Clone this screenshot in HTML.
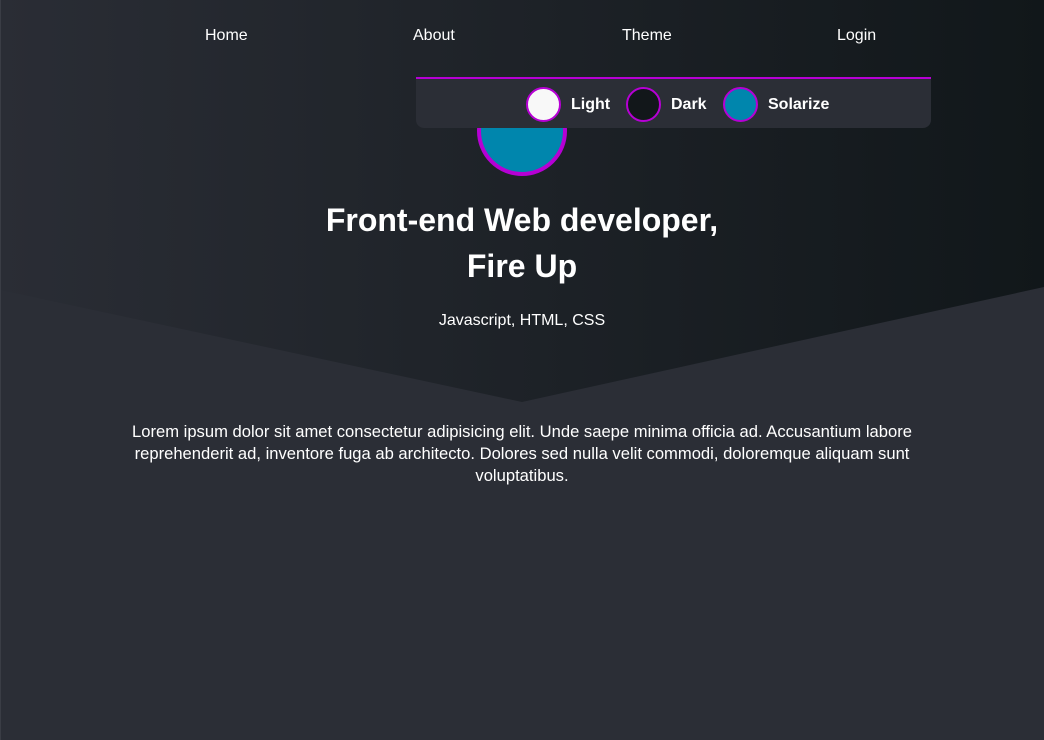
<!DOCTYPE html>
<html><head><style>
body{margin:0;width:1044px;height:740px;overflow:hidden;background:#2b2e36;font-family:"Liberation Sans",sans-serif;color:#fff;position:relative}
svg.bg{position:absolute;left:0;top:0}
.nav a{position:absolute;top:27px;font-size:16px;color:#fff;text-decoration:none}
.avatar{position:absolute;left:477px;top:86px;width:82px;height:82px;border-radius:50%;background:#0086ad;border:4px solid #b600d4}
.menu{position:absolute;left:416px;top:77px;width:515px;height:49px;background:#2b2e36;border-top:2px solid #b600d4;border-radius:0 0 8px 8px}
.opt{position:absolute;top:8px;display:flex;align-items:center;font-weight:bold;font-size:16px}
.c{border-radius:50%;border:2px solid #b600d4;margin-right:10px;box-sizing:border-box;width:35px;height:35px}
h1{position:absolute;top:197px;left:0;width:1044px;text-align:center;margin:0;font-size:32px;line-height:46px;font-weight:bold}
.sub{position:absolute;top:312px;width:1044px;text-align:center;font-size:16px}
.p{position:absolute;top:421px;left:107px;width:830px;text-align:center;font-size:16.6px;line-height:22px}
</style></head><body>
<svg class="bg" width="1044" height="740"><defs><linearGradient id="g" x1="0" x2="1"><stop offset="0" stop-color="#2a2d35"/><stop offset="1" stop-color="#11171a"/></linearGradient></defs>
<polygon points="0,0 1044,0 1044,287 522,402 0,290" fill="url(#g)"/>
<rect x="0" y="0" width="1" height="740" fill="#3a3d45"/></svg>
<div class="nav"><a style="left:205px">Home</a><a style="left:413px">About</a><a style="left:622px">Theme</a><a style="left:837px">Login</a></div>
<div class="avatar"></div>
<div class="menu">
<div class="opt" style="left:110px"><div class="c" style="background:#f8f8f8"></div>Light</div>
<div class="opt" style="left:210px"><div class="c" style="background:#12171a"></div>Dark</div>
<div class="opt" style="left:307px"><div class="c" style="background:#0086ad"></div>Solarize</div>
</div>
<h1>Front-end Web developer,<br>Fire Up</h1>
<div class="sub">Javascript, HTML, CSS</div>
<div class="p">Lorem ipsum dolor sit amet consectetur adipisicing elit. Unde saepe minima officia ad. Accusantium labore reprehenderit ad, inventore fuga ab architecto. Dolores sed nulla velit commodi, doloremque aliquam sunt voluptatibus.</div>
</body></html>
